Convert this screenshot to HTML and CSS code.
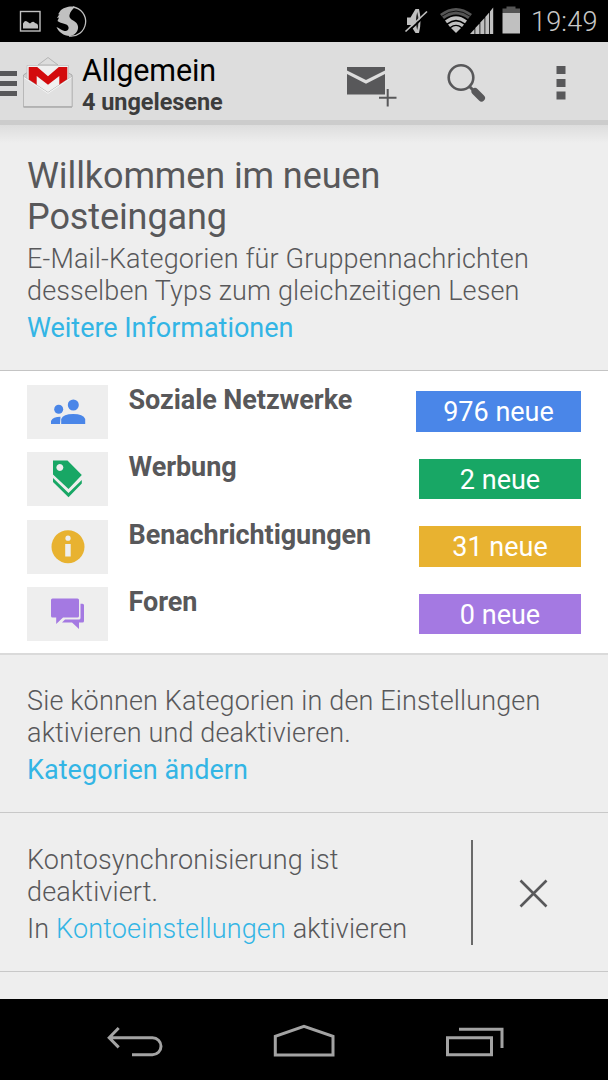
FILE: index.html
```html
<!DOCTYPE html>
<html lang="de">
<head>
<meta charset="utf-8">
<title>Allgemein</title>
<link rel="stylesheet" href="styles.css">
</head>
<body>
<div class="status">
  <svg class="status-left" width="100" height="42" viewBox="0 0 100 42">
    <rect x="20.500" y="11.500" width="19.500" height="19.500" fill="none" stroke="#c0c0c0" stroke-width="1.400"/>
    <path d="M23 28.500v-5q2-3.500 4-2l3 2q3-3 5-.5 3 .5 3 3v2.500z" fill="#c0c0c0"/>
    <path d="M73 7a14.400 14.400 0 0 1-4 29" fill="none" stroke="#c0c0c0" stroke-width="1.300"/>
    <path d="M75 7c-5-1.500-12 1-14.500 3.500l-2.500 4 1.500-.5-2.500 4 2-.5-1.500 3.500c4 3 10 2 11 6 .6 3-2 4.500-4 4-3-.5-5-3-8-4 2 5 8 9.500 14 9 6-1 10-8 6-13-3-3-8-4-7-8 .5-3 3-6 5.500-8z" fill="#c0c0c0"/>
  </svg>
  <svg class="status-right" width="128" height="42" viewBox="400 0 128 42">
    <path d="M407 17.500h3.500L415.500 9h3.500q3 12 0 24h-3.500l-5-8H407z" fill="#c0c0c0"/>
    <path d="M417.200 12q2.500 9 0 18q-2.500-9 0-18z" fill="#222"/>
    <path d="M406 33.500l22-20.500" stroke="#000" stroke-width="1.800"/>
    <path d="M405.500 31.500l21.500-20" stroke="#c0c0c0" stroke-width="1.700"/>
    <path d="M440 14q16-12 32 0l-4 5q-12-9-24 0z" fill="#555"/>
    <path d="M441.800 16.300q14.200-10.500 28.400 0" fill="none" stroke="#111" stroke-width="1"/>
    <path d="M445 20.500q11-8.500 22 0l-2 2.700q-9-7-18 0z" fill="#c0c0c0"/>
    <path d="M448 24.500q8-6 16 0l-2 2.400q-6-4.500-12 0z" fill="#c0c0c0"/>
    <path d="M451 28q5-4 10 0l-5 5z" fill="#c0c0c0"/>
    <path d="M470 34l4.500-5v5zM475.300 34v-6l4.200-4.500V34zM480.300 34V22.500l4.200-4.500v16zM485.300 34V17l3.900-4.500V34zM490 34V11.500l3.200-4V34z" fill="#c0c0c0"/>
    <path d="M502.500 13V8.500h4v-2h9v2h4.500V13z" fill="#555"/>
    <path d="M502.500 13H520v20.500h-17.500z" fill="#c0c0c0"/>
  </svg>
  <span class="clock">19:49</span>
</div>
<header class="bar">
  <svg class="logo" width="76" height="78" viewBox="0 42 76 78">
    <path d="M0 71h17v5H0zM0 81h17v5H0zM0 91h17v5H0z" fill="#58585a"/>
    <path d="M38 65l10-7.500L58 65z" fill="#ddd" stroke="#aaa" stroke-width=".8"/>
    <path d="M23.500 75l3-2h42l3.500 2v32h-48.500z" fill="#d0d0d0" stroke="#aaa"/>
    <path d="M27 65.500h41.500V84L48 93 27 83z" fill="#f0f0f0" stroke="#bbb" stroke-width=".7"/>
    <path d="M28.700 67h8.500L48 76.200 58.800 67h8.500v15.500l-8 5V76L48 84.800 36.700 76v11.500l-8-5z" fill="#d30b0d"/>
    <path d="M23.500 76.500L48 92.500l24-16v30H23.500z" fill="#e0e0e0" stroke="#b5b5b5" stroke-width=".8"/>
    <path d="M24 77.500L48 93.300l23.500-15.800" fill="none" stroke="#f6f6f6" stroke-width="1"/>
    <path d="M23.500 107H72" stroke="#aaa" stroke-width="1.200"/>
  </svg>
  <div class="heading">
    <div class="folder"><span>Allgemein</span></div>
    <div class="unread"><span>4 ungelesene</span></div>
  </div>
  <svg class="actions" width="268" height="78" viewBox="340 42 268 78">
    <path d="M347 67h38v3.500L366 80l-19-9.500z" fill="#58585a"/>
    <path d="M347 74l19 9.700L385 74v20.500h-38z" fill="#58585a"/>
    <path d="M379 97.700h17.500M387.700 89v17.500" stroke="#58585a" stroke-width="2"/>
    <circle cx="461" cy="77.500" r="12.300" fill="none" stroke="#58585a" stroke-width="2.600"/>
    <path d="M469.500 86.500l5 5" stroke="#58585a" stroke-width="3"/>
    <path d="M475 91.500l6.500 6.500" stroke="#58585a" stroke-width="7" stroke-linecap="round"/>
    <path d="M556.500 66h9v8h-9zM556.500 79h9v8h-9zM556.500 91.500h9v8h-9z" fill="#58585a"/>
  </svg>
</header>
<main>
  <section class="intro">
    <h1>Willkommen im neuen<br>Posteingang</h1>
    <p class="text">E-Mail-Kategorien für Gruppennachrichten<br>desselben Typs zum gleichzeitigen Lesen</p>
    <a class="link">Weitere Informationen</a>
  </section>
  <section class="list">
    <div class="row">
      <div class="tile"><svg width="81" height="54" viewBox="0 0 81 54" fill="#4a86e8"><circle cx="31.700" cy="24.200" r="4.500"/><circle cx="46.300" cy="20" r="5.500"/><path d="M24 39v-3q2-4.200 9.500-4.200l-.5 7.200zM34.200 39v-5q2-5 12-5t12 5v5z"/></svg></div>
      <span class="label">Soziale Netzwerke</span><span class="badge blue">976 neue</span>
    </div>
    <div class="row">
      <div class="tile"><svg width="81" height="54" viewBox="0 0 81 54" fill="#18a765"><path fill-rule="evenodd" d="M26 8.500h14.500L54.800 23 41.500 37 26 22.500zM32.800 12a3.500 3.500 0 1 0 .1 0z"/><path d="M26 26l15.500 15L54.800 28v3.500L41.500 45.300 26 30z"/></svg></div>
      <span class="label">Werbung</span><span class="badge green">2 neue</span>
    </div>
    <div class="row">
      <div class="tile"><svg width="81" height="54" viewBox="0 0 81 54"><circle cx="41" cy="26.700" r="16.500" fill="#e8b230"/><circle cx="41" cy="18.200" r="2.600" fill="#eee"/><path d="M38.200 24h5.500v12.500h-5.500z" fill="#eee"/></svg></div>
      <span class="label">Benachrichtigungen</span><span class="badge yellow">31 neue</span>
    </div>
    <div class="row">
      <div class="tile"><svg width="81" height="54" viewBox="0 0 81 54" fill="#a479e2"><path d="M25.500 11.500h25q1.500 0 1.500 1.500v16q0 1.500-1.500 1.500H36L29.200 37v-6.500h-3.700Q24 30.500 24 29V13q0-1.500 1.500-1.500z"/><path d="M53.500 16.700h2q1.500 0 1.500 1.500V34q0 1.500-1.500 1.500H52v6.500L45 35.500H35l3-3h14q1.500 0 1.500-1.500z"/></svg></div>
      <span class="label">Foren</span><span class="badge purple">0 neue</span>
    </div>
  </section>
  <section class="settings">
    <p class="text">Sie können Kategorien in den Einstellungen<br>aktivieren und deaktivieren.</p>
    <a class="link">Kategorien ändern</a>
  </section>
  <section class="sync">
    <div class="sync-text">
      <p class="text">Kontosynchronisierung ist<br>deaktiviert.</p>
      <p class="text enable">In <a>Kontoeinstellungen</a> aktivieren</p>
    </div>
    <svg class="close" width="134" height="158" viewBox="473 813 134 158"><path d="M520.500 880.500l26 26M546.500 880.500l-26 26" stroke="#58585a" stroke-width="2.600"/></svg>
  </section>
</main>
<nav class="nav">
  <svg width="608" height="81" viewBox="0 999 608 81" fill="none" stroke="#a3a3a3" stroke-width="3">
    <path d="M109 1037.700h43.500a8.500 8.500 0 0 1 0 17H132M118.700 1028l-9.500 9.700 9.500 9.700"/>
    <path d="M275.300 1055v-18.700l28.700-10 29 10v18.700z"/>
    <path d="M447.500 1037.700h44v17h-44zM459 1029.200h43V1048"/>
  </svg>
</nav>
</body>
</html>
```
FILE: styles.css
```css
* { box-sizing: border-box; }
body {
  margin: 0;
  width: 608px;
  height: 1080px;
  display: flex;
  flex-direction: column;
  overflow: hidden;
  background: #eee;
  color: #58585a;
  font-family: Roboto, "Liberation Sans", sans-serif;
  white-space: nowrap;
}
h1, p { margin: 0; }
svg { display: block; flex: none; }
.status {
  height: 42px;
  flex: none;
  display: flex;
  background: #000;
}
.status-right { margin-left: 300px; }
.clock {
  margin-left: 3px;
  font-size: 27px;
  font-weight: 300;
  line-height: 45px;
  letter-spacing: .2px;
  color: #c8c8c8;
}
.bar {
  height: 83px;
  flex: none;
  display: flex;
  background: #ddd;
  border-bottom: 5px solid #ccc;
}
.heading { width: 264px; padding: 10px 0 0 6px; }
.folder { font-size: 30.500px; line-height: 37px; letter-spacing: -.15px; color: #000; }
.unread { font-size: 23.500px; line-height: 26px; font-weight: 700; letter-spacing: -.05px; color: #3c3c3c; }
main { height: 874px; flex: none; }
.intro {
  height: 246px;
  padding: 31px 27px 0;
  border-bottom: 1px solid #c4c4c4;
  background: linear-gradient(#ddd, #eee 18px);
}
h1 { font-size: 36px; line-height: 41px; font-weight: 400; letter-spacing: -.1px; }
.text { font-size: 27px; line-height: 32px; font-weight: 300; letter-spacing: .155px; }
.intro .text { padding-top: 5px; }
.link {
  display: block;
  padding-top: 5px;
  font-size: 27px;
  line-height: 32px;
  color: #33b5e5;
}
.intro .link { letter-spacing: -.03px; }
.settings .link { letter-spacing: .05px; }
.list {
  height: 284px;
  padding: 13.500px 27px 0;
  display: flex;
  flex-direction: column;
  gap: 13.500px;
  background: #fff;
  border-bottom: 2px solid #dadada;
}
.row { height: 54px; display: flex; flex: none; }
.tile { width: 81px; background: #eee; flex: none; }
.label {
  flex: 1;
  padding-left: 20.500px;
  font-size: 27px;
  line-height: 31px;
  font-weight: 700;
  letter-spacing: -.07px;
}
.badge {
  width: 162px;
  height: 40.500px;
  margin-top: 6.750px;
  flex: none;
  text-align: center;
  font-size: 27px;
  line-height: 43px;
  color: #fff;
}
.blue { width: 165px; background: #4a86e8; }
.green { background: #18a765; }
.yellow { background: #e8b230; }
.purple { background: #a479e2; }
.settings { height: 158px; padding: 30px 27px 0; border-bottom: 1px solid #c8c8c8; }
.sync {
  height: 159px;
  display: flex;
  border-bottom: 1px solid #c8c8c8;
}
.sync-text {
  width: 446px;
  height: 105px;
  margin: 27px 0 0 27px;
  padding-top: 4px;
  border-right: 2px solid #6a6a6a;
}
.enable { padding-top: 5px; }
.enable a { color: #33b5e5; }
.nav { height: 81px; flex: none; background: #000; }
```
